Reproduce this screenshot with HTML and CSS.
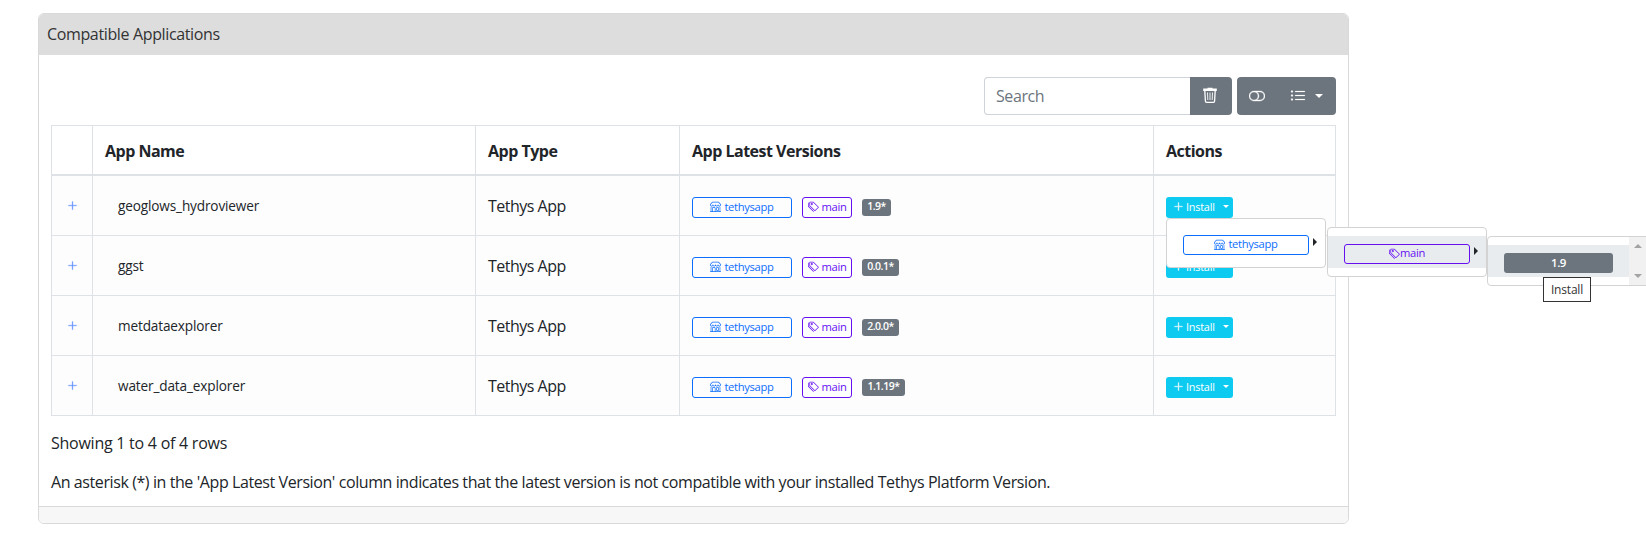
FILE: index.html
```html
<!DOCTYPE html>
<html lang="en">
<head>
<meta charset="utf-8">
<title>Compatible Applications</title>
<link rel="stylesheet" href="styles.css">
</head>
<body>
<svg class="defs" width="0" height="0">
  <symbol id="shop" viewBox="0 0 16 16"><path d="M2.97 1.35A1 1 0 0 1 3.73 1h8.54a1 1 0 0 1 .76.35l2.609 3.044A1.5 1.5 0 0 1 16 5.37v.255a2.375 2.375 0 0 1-4.25 1.458A2.371 2.371 0 0 1 9.875 8 2.37 2.37 0 0 1 8 7.083 2.37 2.37 0 0 1 6.125 8a2.37 2.37 0 0 1-1.875-.917A2.375 2.375 0 0 1 0 5.625V5.37a1.5 1.5 0 0 1 .361-.976l2.61-3.045zm1.78 4.275a1.375 1.375 0 0 0 2.75 0 .5.5 0 0 1 1 0 1.375 1.375 0 0 0 2.75 0 .5.5 0 0 1 1 0 1.375 1.375 0 1 0 2.75 0V5.37a.5.5 0 0 0-.12-.325L12.27 2H3.73L1.12 5.045A.5.5 0 0 0 1 5.37v.255a1.375 1.375 0 0 0 2.75 0 .5.5 0 0 1 1 0zM1.5 8.5A.5.5 0 0 1 2 9v6h1v-5a1 1 0 0 1 1-1h3a1 1 0 0 1 1 1v5h6V9a.5.5 0 0 1 1 0v6h.5a.5.5 0 0 1 0 1H.5a.5.5 0 0 1 0-1H1V9a.5.5 0 0 1 .5-.5zM4 15h3v-5H4v5zm5-5a1 1 0 0 1 1-1h2a1 1 0 0 1 1 1v3a1 1 0 0 1-1 1h-2a1 1 0 0 1-1-1v-3zm3 0h-2v3h2v-3z"/></symbol>
  <symbol id="tags" viewBox="0 0 16 16"><path d="M3 2v4.586l7 7L14.586 9l-7-7H3zM2 2a1 1 0 0 1 1-1h4.586a1 1 0 0 1 .707.293l7 7a1 1 0 0 1 0 1.414l-4.586 4.586a1 1 0 0 1-1.414 0l-7-7A1 1 0 0 1 2 6.586V2z"/><path d="M5.5 5a.5.5 0 1 1 0-1 .5.5 0 0 1 0 1zm0 1a1.5 1.5 0 1 0 0-3 1.5 1.5 0 0 0 0 3zM1 7.086a1 1 0 0 0 .293.707L8.75 15.25l-.043.043a1 1 0 0 1-1.414 0l-7-7A1 1 0 0 1 0 7.586V3a1 1 0 0 1 1-1v5.086z"/></symbol>
  <symbol id="plus" viewBox="0 0 16 16"><path d="M8 2a.5.5 0 0 1 .5.5v5h5a.5.5 0 0 1 0 1h-5v5a.5.5 0 0 1-1 0v-5h-5a.5.5 0 0 1 0-1h5v-5A.5.5 0 0 1 8 2z" stroke="currentColor" stroke-width=".5"/></symbol>
  <symbol id="trash" viewBox="0 0 16 16"><path d="M5.500 1.500V.8h5v.7h4.300v2.400H1.200V1.500z"/><path d="M2.800 3.500l.6 10.600a1.200 1.200 0 0 0 1.200 1.200h6.800a1.200 1.200 0 0 0 1.200-1.200l.6-10.600" fill="none" stroke="currentColor" stroke-width="1.300"/><path d="M5.500 5.500l.3 7.500M8 5.500V13M10.500 5.500l-.3 7.500" fill="none" stroke="currentColor" stroke-width=".9"/></symbol>
  <symbol id="toggle" viewBox="0 0 16 16"><path d="M11 4a4 4 0 0 1 0 8H8a4.992 4.992 0 0 0 2-4 4.992 4.992 0 0 0-2-4h3zm-6 8a4 4 0 1 1 0-8 4 4 0 0 1 0 8zM0 8a5 5 0 0 0 5 5h6a5 5 0 0 0 0-10H5a5 5 0 0 0-5 5z" stroke="currentColor" stroke-width=".35"/></symbol>
  <symbol id="list" viewBox="0 0 16 16"><path d="M5 11.500a.5.5 0 0 1 .5-.5h9a.5.5 0 0 1 0 1h-9a.5.5 0 0 1-.5-.5zm0-4a.5.5 0 0 1 .5-.5h9a.5.5 0 0 1 0 1h-9a.5.5 0 0 1-.5-.5zm0-4a.5.5 0 0 1 .5-.5h9a.5.5 0 0 1 0 1h-9a.5.5 0 0 1-.5-.5zm-3 1a1 1 0 1 0 0-2 1 1 0 0 0 0 2zm0 4a1 1 0 1 0 0-2 1 1 0 0 0 0 2zm0 4a1 1 0 1 0 0-2 1 1 0 0 0 0 2z" stroke="currentColor" stroke-width=".2"/></symbol>
</svg>
<main class="card">
  <header class="card-header">Compatible Applications</header>
  <div class="card-body">
    <div class="toolbar">
      <div class="search"><input class="search-input" placeholder="Search" aria-label="Search"><button class="tool trash" aria-label="Clear"><svg class="ic16"><use href="#trash"/></svg></button></div>
      <div class="tools"><button class="tool" aria-label="Toggle"><svg class="ic16"><use href="#toggle"/></svg></button><button class="tool columns" aria-label="Columns"><svg class="ic16"><use href="#list"/></svg><i class="caret"></i></button></div>
    </div>
    <table class="apps">
      <colgroup><col class="c1"><col class="c2"><col class="c3"><col class="c4"><col class="c5"></colgroup>
      <thead><tr><th></th><th>App Name</th><th>App Type</th><th>App Latest Versions</th><th>Actions</th></tr></thead>
      <tbody>
        <tr><td class="expand"><svg class="ic10"><use href="#plus"/></svg></td><td class="name">geoglows_hydroviewer</td><td>Tethys App</td>
          <td><div class="tags"><span class="tag blue"><svg class="ic11"><use href="#shop"/></svg>tethysapp</span><span class="tag purple"><svg class="ic11"><use href="#tags"/></svg>main</span><span class="version v1">1.9*</span></div></td>
          <td><div class="action"><button class="install"><svg class="ic10"><use href="#plus"/></svg>Install<i class="caret small"></i></button>
            <div class="menu m1"><div class="item"><span class="tag blue wide"><svg class="ic11"><use href="#shop"/></svg>tethysapp</span><i class="arrow"></i></div></div>
            <div class="menu m2"><div class="item active"><span class="tag purple wide"><svg class="ic11"><use href="#tags"/></svg>main</span><i class="arrow"></i></div></div>
            <div class="menu m3"><div class="item active"><span class="pick">1.9</span></div><div class="scroll"><i class="up"></i><i class="down"></i></div></div>
            <div class="tooltip">Install</div>
          </div></td></tr>
        <tr><td class="expand"><svg class="ic10"><use href="#plus"/></svg></td><td class="name">ggst</td><td>Tethys App</td>
          <td><div class="tags"><span class="tag blue"><svg class="ic11"><use href="#shop"/></svg>tethysapp</span><span class="tag purple"><svg class="ic11"><use href="#tags"/></svg>main</span><span class="version v2">0.0.1*</span></div></td>
          <td><button class="install"><svg class="ic10"><use href="#plus"/></svg>Install<i class="caret small"></i></button></td></tr>
        <tr><td class="expand"><svg class="ic10"><use href="#plus"/></svg></td><td class="name">metdataexplorer</td><td>Tethys App</td>
          <td><div class="tags"><span class="tag blue"><svg class="ic11"><use href="#shop"/></svg>tethysapp</span><span class="tag purple"><svg class="ic11"><use href="#tags"/></svg>main</span><span class="version v2">2.0.0*</span></div></td>
          <td><button class="install"><svg class="ic10"><use href="#plus"/></svg>Install<i class="caret small"></i></button></td></tr>
        <tr><td class="expand"><svg class="ic10"><use href="#plus"/></svg></td><td class="name">water_data_explorer</td><td>Tethys App</td>
          <td><div class="tags"><span class="tag blue"><svg class="ic11"><use href="#shop"/></svg>tethysapp</span><span class="tag purple"><svg class="ic11"><use href="#tags"/></svg>main</span><span class="version v3">1.1.19*</span></div></td>
          <td><button class="install"><svg class="ic10"><use href="#plus"/></svg>Install<i class="caret small"></i></button></td></tr>
      </tbody>
    </table>
    <p class="info">Showing 1 to 4 of 4 rows</p>
    <p class="note">An asterisk (*) in the 'App Latest Version' column indicates that the latest version is not compatible with your installed Tethys Platform Version.</p>
  </div>
  <footer class="card-footer"></footer>
</main>
</body>
</html>
```
FILE: styles.css
```css
* { box-sizing: border-box; }
body { margin: 0; height: 548px; overflow: hidden; padding: 13px 0 0 38px; background: #fff; color: #212529; font: 16px/24px "Open Sans", "Noto Sans", sans-serif; letter-spacing: -0.41px; }
.defs { position: absolute; }
svg { fill: currentColor; flex: none; display: block; }
button { font: inherit; letter-spacing: inherit; border: 0; margin: 0; }
.card { width: 1311px; height: 511px; border: 1px solid #d9d9d9; border-radius: 6px; display: flex; flex-direction: column; }
.card-header { height: 41px; background: #ddd; border-radius: 5px 5px 0 0; padding: 8px; color: #333; letter-spacing: -0.36px; }
.card-body { flex: 1; padding: 22px 12px 0; }
.card-footer { height: 17px; background: #f7f7f7; border-top: 1px solid #d9d9d9; border-radius: 0 0 5px 5px; }
.toolbar { display: flex; justify-content: flex-end; gap: 5px; height: 38px; margin-bottom: 10px; }
.search { display: flex; }
.search-input { width: 206px; height: 38px; border: 1px solid #ced4da; border-right: 0; border-radius: 4px 0 0 4px; padding: 0 11px; font: inherit; letter-spacing: inherit; outline: 0; }
.search-input::placeholder { color: #6c757d; opacity: 1; }
.tool { height: 38px; padding: 0 12px; background: #6c757d; color: #fff; display: flex; align-items: center; }
.trash { width: 42px; padding: 0 13px 2px 12px; border-radius: 0 4px 4px 0; }
.tools { display: flex; width: 99px; background: #6c757d; border-radius: 4px; }
.tools .tool { background: none; }
.columns { padding-left: 13px; }
.ic16 { width: 16px; height: 16px; }
.ic11 { width: 11px; height: 11px; }
.ic10 { width: 11px; height: 11px; }
.caret { border: 4px solid transparent; border-top-color: currentColor; border-bottom: 0; margin-left: 9px; }
.caret.small { border-width: 3px 3px 0; margin-left: 6px; }
.apps { width: 1285px; table-layout: fixed; border-collapse: separate; border-spacing: 0; border: solid #dee2e6; border-width: 1px 0 0 1px; }
.c1 { width: 41px; } .c2 { width: 383px; } .c3 { width: 204px; } .c4 { width: 474px; } .c5 { width: 182px; }
th, td { border: solid #dee2e6; border-width: 0 1px 1px 0; padding: 0 12px; text-align: left; vertical-align: middle; letter-spacing: -0.5px; }
th { height: 50px; border-bottom-width: 2px; font-weight: 700; padding-top: 1px; }
td { height: 60px; background: #fdfdfd; padding-top: 1px; }
.name { font-size: 13.600px; padding-left: 25px; letter-spacing: -0.14px; }
.expand { padding: 0 15px; color: #5b8cff; }
.tags { display: flex; align-items: center; gap: 10px; padding-top: 2px; }
.tag { display: flex; align-items: center; justify-content: center; gap: 3px; width: 50px; height: 21px; border: 1px solid; border-radius: 3px; font-size: 11.2px; line-height: 16px; letter-spacing: -0.32px; }
.tag, .version, .install { padding-bottom: 1px; }
.blue { width: 100px; color: #0d6efd; }
.purple { color: #6610f2; }
.tag.wide { width: 126px; height: 20px; }
.purple.wide { gap: 0; }
.version, .pick { background: #6c757d; color: #fff; border-radius: 3px; height: 17px; display: flex; align-items: center; justify-content: center; font-size: 10.500px; font-weight: 600; line-height: 15px; }
.v1 { width: 29px; } .v2 { width: 37px; } .v3 { width: 43px; }
.action { position: relative; }
.install { display: flex; align-items: center; width: 67px; height: 21px; margin-top: 2px; padding: 0 6px 1px 7px; background: #0dcaf0; color: #fff; border-radius: 3px; font-size: 10.800px; font-weight: 500; line-height: 16px; letter-spacing: -0.2px; gap: 2px; }
.menu { position: absolute; z-index: 2; width: 160px; height: 50px; padding: 8px 0; background: #fff; border: 1px solid #d3d3d3; border-radius: 4px; }
.m1 { left: 0; top: 21px; }
.m2 { left: 161px; top: 30px; }
.m3 { left: 321px; top: 39px; width: 165px; display: flex; }
.item { flex: 1; height: 32px; padding: 8px 0 0 16px; display: flex; gap: 4px; }
.active { background: #e9ecef; }
.arrow { border: 4px solid transparent; border-left-color: #212529; border-right: 0; height: 8px; margin-top: 3px; }
.m3 .item { flex: none; width: 141px; }
.pick { width: 109px; height: 20px; font-size: 11.500px; }
.scroll { width: 17px; height: 48px; margin-top: -8px; background: #f1f1f1; display: flex; flex-direction: column; justify-content: space-between; align-items: center; padding: 7px 0; }
.up, .down { border: 4px solid transparent; }
.up { border-top: 0; border-bottom-color: #a3a3a3; }
.down { border-bottom: 0; border-top-color: #a3a3a3; }
.tooltip { position: absolute; z-index: 3; left: 377px; top: 80px; width: 48px; height: 25px; background: #fff; border: 1px solid #333; color: #333; font-size: 12px; line-height: 23px; letter-spacing: -0.2px; text-align: center; }
p { margin: 0; }
.info { margin-top: 15px; letter-spacing: -0.25px; }
.note { margin-top: 15px; white-space: nowrap; }
```
